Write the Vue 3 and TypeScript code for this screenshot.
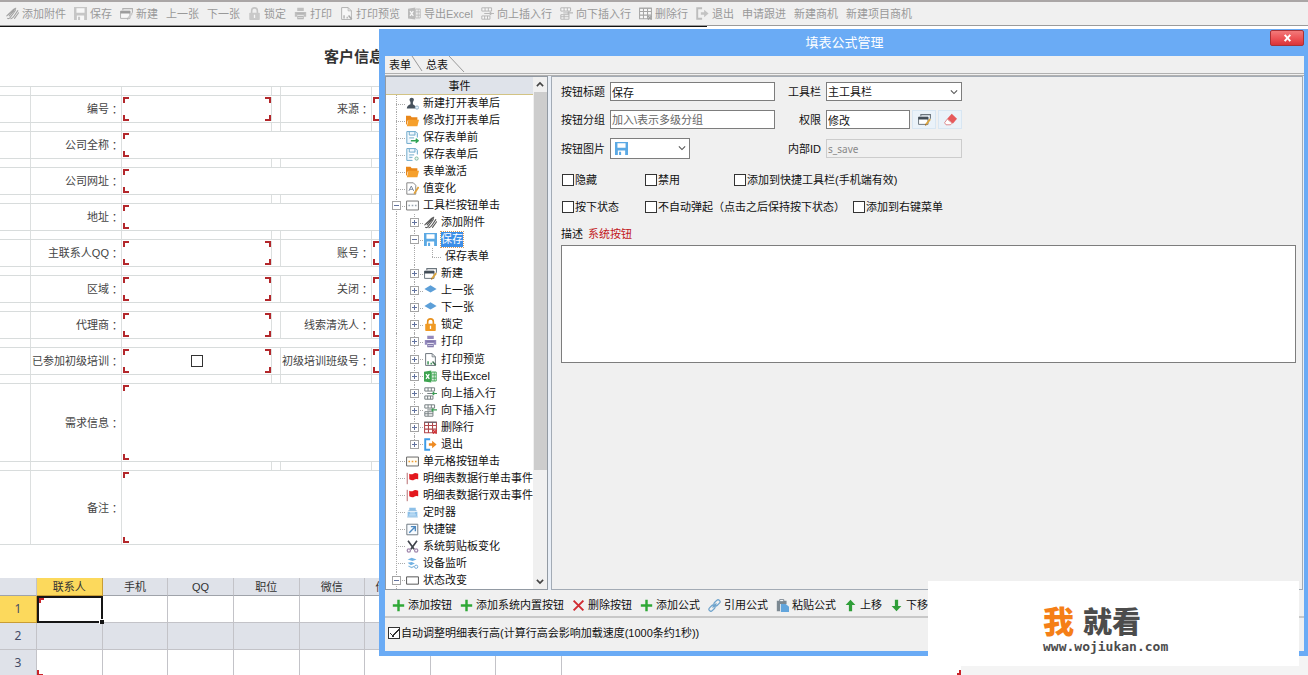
<script setup lang="ts">
import { ref } from 'vue'

interface Tool { text: string; icon?: string }
interface FormRow { label: string; second?: string; size: 'line' | 'tall' | 'note'; check?: boolean; plainGap?: boolean }
interface TreeNode { text: string; icon?: string; level: number; toggle?: '+' | '-'; last?: boolean; selected?: boolean }

const tools: Tool[] = [
  { text: '添加附件', icon: 'clip' },
  { text: '保存', icon: 'save' },
  { text: '新建', icon: 'new' },
  { text: '上一张' },
  { text: '下一张' },
  { text: '锁定', icon: 'lock' },
  { text: '打印', icon: 'print' },
  { text: '打印预览', icon: 'preview' },
  { text: '导出Excel', icon: 'excel' },
  { text: '向上插入行', icon: 'rowup' },
  { text: '向下插入行', icon: 'rowdown' },
  { text: '删除行', icon: 'delrow' },
  { text: '退出', icon: 'exit' },
  { text: '申请跟进' },
  { text: '新建商机' },
  { text: '新建项目商机' },
]

const rows: FormRow[] = [
  { label: '编号', second: '来源', size: 'line' },
  { label: '公司全称', size: 'line' },
  { label: '公司网址', size: 'line' },
  { label: '地址', size: 'line' },
  { label: '主联系人QQ', second: '账号', size: 'line', plainGap: true },
  { label: '区域', second: '关闭', size: 'line', plainGap: true },
  { label: '代理商', second: '线索清洗人', size: 'line', plainGap: true },
  { label: '已参加初级培训', second: '初级培训班级号', size: 'line', check: true },
  { label: '需求信息', size: 'tall' },
  { label: '备注', size: 'note' },
]

const columns: string[] = ['联系人', '手机', 'QQ', '职位', '微信', '传真号码', '', '']

const tree: TreeNode[] = [
  { text: '新建打开表单后', icon: 'user', level: 0 },
  { text: '修改打开表单后', icon: 'folder', level: 0 },
  { text: '保存表单前', icon: 'savebefore', level: 0 },
  { text: '保存表单后', icon: 'saveafter', level: 0 },
  { text: '表单激活', icon: 'folder', level: 0 },
  { text: '值变化', icon: 'value', level: 0 },
  { text: '工具栏按钮单击', icon: 'toolbox', level: 0, toggle: '-' },
  { text: '添加附件', icon: 'clip', level: 1, toggle: '+' },
  { text: '保存', icon: 'save', level: 1, toggle: '-', selected: true },
  { text: '保存表单', level: 2, last: true },
  { text: '新建', icon: 'new', level: 1, toggle: '+' },
  { text: '上一张', icon: 'diamond', level: 1, toggle: '+' },
  { text: '下一张', icon: 'diamond', level: 1, toggle: '+' },
  { text: '锁定', icon: 'lock', level: 1, toggle: '+' },
  { text: '打印', icon: 'print', level: 1, toggle: '+' },
  { text: '打印预览', icon: 'preview', level: 1, toggle: '+' },
  { text: '导出Excel', icon: 'excel', level: 1, toggle: '+' },
  { text: '向上插入行', icon: 'rowup', level: 1, toggle: '+' },
  { text: '向下插入行', icon: 'rowdown', level: 1, toggle: '+' },
  { text: '删除行', icon: 'delrow', level: 1, toggle: '+' },
  { text: '退出', icon: 'exit', level: 1, toggle: '+', last: true },
  { text: '单元格按钮单击', icon: 'cellbtn', level: 0 },
  { text: '明细表数据行单击事件', icon: 'flag', level: 0 },
  { text: '明细表数据行双击事件', icon: 'flag', level: 0 },
  { text: '定时器', icon: 'timer', level: 0 },
  { text: '快捷键', icon: 'shortcut', level: 0 },
  { text: '系统剪贴板变化', icon: 'scissors', level: 0 },
  { text: '设备监听', icon: 'device', level: 0 },
  { text: '状态改变', icon: 'rect', level: 0, toggle: '-' },
]

const actions: Tool[] = [
  { text: '添加按钮', icon: 'plus' },
  { text: '添加系统内置按钮', icon: 'plus' },
  { text: '删除按钮', icon: 'cross' },
  { text: '添加公式', icon: 'plus' },
  { text: '引用公式', icon: 'link' },
  { text: '粘贴公式', icon: 'paste' },
  { text: '上移', icon: 'up' },
  { text: '下移', icon: 'down' },
]

const buttonTitle = ref('保存')
const buttonGroup = ref('')
const permission = ref('修改')
const innerId = ref('s_save')
const description = ref('')
const autoHeight = ref(true)
</script>

<template>
  <div class="page">
    <svg class="symbols" aria-hidden="true">
      <symbol id="clip" viewBox="0 0 16 16"><g fill="none" stroke="#555" stroke-width="1.300" stroke-linecap="round"><path d="M1 11 L8 4 Q10.500 1.500 11.500 3 Q12 4 10 6.500 L5 13 Q3 15 2 14" /><path d="M4 11 L10 4.500 M6 14.500 Q8 14 10 11 L14.500 4.500 M10.500 14 L15.500 7 M3 9.500 L12 1.500" /></g></symbol>
      <symbol id="save" viewBox="0 0 16 16"><path fill="#5ba9e4" d="M0 0h16v16H0z" /><path fill="#fff" d="M3 1.500h10V7H3zM3.500 10.500h9V16h-9z" /><path fill="#5ba9e4" d="M5 12h2.500v4H5z" /></symbol>
      <symbol id="new" viewBox="0 0 16 16"><path fill="none" stroke="#6b757d" stroke-width="1.300" d="M3.500 4V2h11.800v5" /><path fill="#fff" stroke="#6b757d" stroke-width="1.200" d="M.700 5h11.600v9H.700z" /><path fill="#3f4a54" d="M.5 5h12v3H.5z" /><path stroke="#dba43c" stroke-width="2.200" d="M15 7.500L10 14" /><path fill="#a36b20" d="M8.500 15.800l.5-2.500 2 1.500z" /></symbol>
      <symbol id="diamond" viewBox="0 0 16 16"><path fill="#5c9fd8" d="M8 1.500L15.500 6 8 10.500.5 6z" /></symbol>
      <symbol id="lock" viewBox="0 0 16 16"><path fill="none" stroke="#e8901c" stroke-width="2" d="M4.500 8V4.500a3.500 3.500 0 017 0V8" /><rect x="1.500" y="7" width="13" height="9" rx="1" fill="#f09a24" /><path stroke="#fff" stroke-width="1.600" d="M8 9.500v4" /></symbol>
      <symbol id="print" viewBox="0 0 16 16"><path fill="#9389bd" d="M4 1h8v4H4zM1 6h14v6h-3v-2H4v2H1z" /><path fill="#7f76a8" d="M3 7h10v1.500H3zM4 11h8v4H4z" /><path stroke="#ddd9ee" d="M5 13h6" /></symbol>
      <symbol id="preview" viewBox="0 0 16 16"><path fill="#fff" stroke="#6c757c" stroke-width="1.200" d="M2 .700h8l4 4V15.300H2z" /><path fill="none" stroke="#6c757c" d="M10 .700v4h4" /><path fill="#4c9c64" d="M4 10h2v4H4zM8 12h2v2H8z" /><path stroke="#3f6f52" stroke-width="1.800" d="M10.500 10.500l4 4.500" /></symbol>
      <symbol id="excel" viewBox="0 0 16 16"><path fill="#3ea451" d="M0 2l9-1.500v15L0 14z" /><path stroke="#fff" stroke-width="1.600" d="M2.500 5l4 6M6.500 5l-4 6" /><path fill="#fff" stroke="#3ea451" stroke-width="1.200" d="M9.500 2.500H15v11H9.500z" /><path stroke="#3ea451" stroke-width="1.200" d="M12.500 2.500v11M10 6h5M10 10h5" /></symbol>
      <symbol id="rowup" viewBox="0 0 16 16"><path fill="#fff" stroke="#747d80" stroke-width="1.200" d="M1 1h12v4H1zM5 1v4M9 1v4M1 11h10v4H1zM4.500 11v4M8 11v4" /><path stroke="#747d80" stroke-width="1.200" d="M4 8h6" /><path fill="none" stroke="#3c9a55" stroke-width="1.500" d="M10 8h6M12.500 6L10.500 8l2 2" /></symbol>
      <symbol id="rowdown" viewBox="0 0 16 16"><path fill="#fff" stroke="#747d80" stroke-width="1.200" d="M1 1h12v4H1zM5 1v4M9 1v4M1 9.500h10v5.500H1zM1 12h10M5 9.500v5.500" /><path stroke="#747d80" stroke-width="1.200" d="M4 7.300h5" /><path fill="none" stroke="#3c9a55" stroke-width="1.500" d="M9 7.300h7M11.500 5.300l-2 2 2 2" /></symbol>
      <symbol id="delrow" viewBox="0 0 16 16"><path fill="#fff" stroke="#b0484c" stroke-width="1.300" d="M.700 1.500h14.600v13H.700zM.700 5.500h14.600M.700 10h14.600M5.500 1.500v13M10.500 1.500v13" /><path fill="#5e6570" d="M.5.800h15v1.400H.5z" /><path stroke="#d23438" stroke-width="1.800" d="M11 11l4.500 4.500M15.500 11L11 15.500" /></symbol>
      <symbol id="exit" viewBox="0 0 16 16"><path fill="none" stroke="#3d9be6" stroke-width="2.400" d="M7.500 1.500H1.500v13h6" /><path fill="#ee8a22" d="M6 6.500h4V3.500L15.500 8 10 12.500v-3H6z" /></symbol>
      <symbol id="user" viewBox="0 0 16 16"><circle cx="7" cy="3.500" r="2.700" fill="#47525d" /><path fill="#47525d" d="M5.500 5h3v4l3 2v3H1q0-3 4.500-5z" /><circle cx="13.500" cy="13" r="2" fill="#e8f3fb" stroke="#86a9c3" /></symbol>
      <symbol id="folder" viewBox="0 0 16 16"><path fill="#e8871a" d="M0 2h5.500L7 4h7v4H2l-1 5H0z" /><path fill="#f6a02c" d="M3 7h13l-2 8H1z" /></symbol>
      <symbol id="savebefore" viewBox="0 0 16 16"><path fill="#eef7fd" stroke="#6da9cb" stroke-width="1.200" d="M1 .700h11l2 2V8M1 .700v14.600h6" /><path fill="none" stroke="#6da9cb" stroke-width="1.200" d="M4 1v4h7V1M4 8.500h6" /><path fill="none" stroke="#2fa353" stroke-width="1.800" d="M6 12h9M12 9.500l3 2.500-3 2.500" /></symbol>
      <symbol id="saveafter" viewBox="0 0 16 16"><path fill="#eef7fd" stroke="#6da9cb" stroke-width="1.200" d="M1 .700h11l2 2V8M1 .700v14.600h7" /><path fill="none" stroke="#6da9cb" stroke-width="1.200" d="M4 1v4h7V1M4 8.500h6M4 11.500h4" /><circle cx="13" cy="13" r="2" fill="#eaf6ef" stroke="#6bac91" /></symbol>
      <symbol id="value" viewBox="0 0 16 16"><path fill="#fff" stroke="#7c7c7c" stroke-width="1.100" d="M1 1h8l3 3v11H1z" /><path fill="none" stroke="#68758b" d="M3.500 11l3-6 3 6M4.500 9h4" /><path stroke="#e0a23b" stroke-width="2.200" d="M15.500 6l-5.500 8.500" /></symbol>
      <symbol id="toolbox" viewBox="0 0 16 16"><path fill="#fff" stroke="#777" stroke-width="1.200" d="M.700 2.500h14.600v11H.700z" /><path stroke="#9aa6b1" stroke-width="2" stroke-dasharray="2 2" d="M3 8h10" /></symbol>
      <symbol id="cellbtn" viewBox="0 0 16 16"><path fill="#fffdf7" stroke="#666" stroke-width="1.200" d="M.700 2.500h14.600v11H.700z" /><path stroke="#ef9d2f" stroke-width="2" stroke-dasharray="2 2" d="M3 8h10" /></symbol>
      <symbol id="flag" viewBox="0 0 16 16"><path stroke="#b56a6d" stroke-width="1.200" d="M1.500 1v14" /><path fill="#e3181e" d="M4 2q3 1.500 5 0t6 0v7q-3-1-5 .5T4 9z" /></symbol>
      <symbol id="timer" viewBox="0 0 16 16"><path fill="#8dc0e8" d="M4 2h8v3H4zM2 7h12v6H2z" /><path stroke="#e8f5ff" d="M5 8.500h6M4 11h8" /><path stroke="#7db1dc" d="M3 5.500h10M1.500 13.500h13" /></symbol>
      <symbol id="shortcut" viewBox="0 0 16 16"><path fill="#f7fbff" stroke="#707a83" stroke-width="1.200" d="M1 1.500h13.500v13H1z" /><path fill="none" stroke="#4c87bd" stroke-width="1.700" d="M4 12l7-7M6 4.500h5.500V10" /></symbol>
      <symbol id="scissors" viewBox="0 0 16 16"><path stroke="#3f434a" stroke-width="2" d="M2.500 1l7.500 10.500M13.500 1L6 11.500" /><g fill="none" stroke="#a38aae" stroke-width="1.600"><circle cx="3.500" cy="13" r="2" /><circle cx="12.500" cy="13" r="2" /></g></symbol>
      <symbol id="device" viewBox="0 0 16 16"><path fill="#72b2e3" d="M2 3l5-2 6 2-5 2zM2 7l5-1 4 2-5 2z" /><path fill="none" stroke="#87b9dd" stroke-width="1.300" d="M3 11l4 2 3-1.500" /><circle cx="12.500" cy="12" r="2" fill="#fff" stroke="#5a9bd0" /></symbol>
      <symbol id="rect" viewBox="0 0 16 16"><path fill="#fff" stroke="#555" stroke-width="1.200" d="M.700 3.500h14.600v9H.700z" /></symbol>
      <symbol id="plus" viewBox="0 0 16 16"><path stroke="#2fa836" stroke-width="3" d="M8 1v14M1 8h14" /></symbol>
      <symbol id="cross" viewBox="0 0 16 16"><path stroke="#d12b32" stroke-width="2.400" d="M2 2l12 12M14 2L2 14" /></symbol>
      <symbol id="link" viewBox="0 0 16 16"><g fill="none" stroke="#6ea3cc" stroke-width="1.500"><rect x="7" y="2.500" width="8.500" height="4.800" rx="2.400" transform="rotate(-45 11 5)" /><rect x=".5" y="8.700" width="8.500" height="4.800" rx="2.400" transform="rotate(-45 5 11)" /><path d="M5.500 10.500l5-5" /></g></symbol>
      <symbol id="paste" viewBox="0 0 16 16"><path fill="#7c8992" d="M1 2h12v4H5v9H1z" /><path fill="#fff" stroke="#6b7882" d="M4.500.700h5v2.600h-5z" /><path fill="#62a5dc" d="M6 6h6l4 3.500V16H6z" /></symbol>
      <symbol id="up" viewBox="0 0 16 16"><path fill="#2f9e38" d="M8 1l6 6.500h-4V15H6V7.500H2z" /></symbol>
      <symbol id="down" viewBox="0 0 16 16"><path fill="#2f9e38" d="M8 15l6-6.500h-4V1H6v7.500H2z" /></symbol>
      <symbol id="eraser" viewBox="0 0 16 16"><path fill="#e65a5c" d="M9.500 1L16 7l-5 6-7-6z" /><path fill="#fff" stroke="#d97375" d="M4 7.500l6 5-2 2H2.500L.700 12z" /></symbol>
      <symbol id="chevdown" viewBox="0 0 16 16"><path fill="none" stroke="#555" stroke-width="1.800" d="M3 5.500l5 5 5-5" /></symbol>
      <symbol id="chevup" viewBox="0 0 16 16"><path fill="none" stroke="#444" stroke-width="2.600" d="M3 10.500l5-5 5 5" /></symbol>
      <symbol id="chevbold" viewBox="0 0 16 16"><path fill="none" stroke="#444" stroke-width="2.600" d="M3 5.500l5 5 5-5" /></symbol>
    </svg>

    <header class="toolbar">
      <button v-for="tool in tools" :key="tool.text" type="button" class="tool">
        <svg v-if="tool.icon" class="icon"><use :href="'#' + tool.icon" /></svg>{{ tool.text }}
      </button>
    </header>

    <main class="sheet">
      <h1 class="sheet-title">客户信息</h1>
      <div class="record">
        <div class="gap-row"><i></i><i></i><i></i><i></i><i></i><i></i></div>
        <template v-for="(row, index) in rows" :key="row.label">
          <div class="field-row" :class="[row.size, { wide: !row.second }]">
            <span class="margin-cell"></span>
            <label class="field-label" :for="'field-' + index">{{ row.label }}<span class="colon">：</span></label>
            <div class="field">
              <input v-if="row.check" :id="'field-' + index" type="checkbox" class="box" />
              <input v-else :id="'field-' + index" type="text" class="plain" />
            </div>
            <template v-if="row.second">
              <span class="spacer"></span>
              <label class="field-label" :for="'second-' + index">{{ row.second }}<span class="colon">：</span></label>
              <div class="field"><input :id="'second-' + index" type="text" class="plain" /></div>
            </template>
          </div>
          <div v-if="index < rows.length - 1" class="gap-row" :class="{ open: row.plainGap }"><i></i><i></i><i></i><i></i><i></i><i></i></div>
        </template>
      </div>

      <table class="detail">
        <colgroup><col class="number-col" /><col v-for="(c, i) in columns" :key="i" /></colgroup>
        <thead>
          <tr><th></th><th v-for="(c, i) in columns" :key="i" :class="{ current: i === 0 }">{{ c }}</th></tr>
        </thead>
        <tbody>
          <tr v-for="n in 3" :key="n" :class="{ shaded: n === 2 }">
            <th :class="{ current: n === 1 }">{{ n }}</th>
            <td v-for="(c, i) in columns" :key="i" :class="{ active: n === 1 && i === 0, finish: n === 3 && i === 0 }"></td>
          </tr>
        </tbody>
      </table>
      <div class="outside"></div>
    </main>

    <section class="dialog" aria-labelledby="dialog-title">
      <div class="titlebar">
        <h2 id="dialog-title">填表公式管理</h2>
        <button type="button" class="close" aria-label="关闭">
          <svg viewBox="0 0 10 10"><path stroke="#fff" stroke-width="2.400" d="M1.500 1l7 8M8.500 1l-7 8" /></svg>
        </button>
      </div>
      <div class="client">
        <nav class="tabs">
          <button type="button" class="tab">表单</button>
          <svg class="slant" viewBox="0 0 12 17"><path d="M1 0l10 15" /></svg>
          <button type="button" class="tab">总表</button>
          <svg class="slant end" viewBox="0 0 17 17"><path d="M1 0l15 16" /></svg>
        </nav>

        <div class="panes">
          <aside class="events">
            <div class="events-main">
              <div class="events-head">事件</div>
              <ul class="tree">
                <li v-for="(node, index) in tree" :key="index" class="node">
                  <span v-for="g in node.level" :key="g" class="guide"></span>
                  <span class="guide branch" :class="{ last: node.last }">
                    <button v-if="node.toggle" type="button" class="toggle" :class="{ expand: node.toggle === '+' }" :aria-label="node.text"></button>
                  </span>
                  <svg v-if="node.icon" class="icon"><use :href="'#' + node.icon" /></svg>
                  <span class="node-text" :class="{ selected: node.selected }">{{ node.text }}</span>
                </li>
              </ul>
            </div>
            <div class="scrollbar">
              <svg><use href="#chevup" /></svg>
              <span class="thumb"></span>
              <svg><use href="#chevbold" /></svg>
            </div>
          </aside>

          <div class="props">
            <div class="prop-grid">
              <label for="p-title">按钮标题</label>
              <input id="p-title" v-model="buttonTitle" type="text" class="text" />
              <label for="p-bar" class="right">工具栏</label>
              <div class="select">
                <select id="p-bar"><option>主工具栏</option></select>
                <svg class="chev"><use href="#chevdown" /></svg>
              </div>
              <label for="p-group">按钮分组</label>
              <input id="p-group" v-model="buttonGroup" type="text" class="text" placeholder="加入\表示多级分组" />
              <label for="p-right" class="right">权限</label>
              <div class="permission">
                <input id="p-right" v-model="permission" type="text" class="text" />
                <button type="button" class="mini" aria-label="编辑"><svg class="icon"><use href="#new" /></svg></button>
                <button type="button" class="mini" aria-label="清除"><svg class="icon"><use href="#eraser" /></svg></button>
              </div>
              <label for="p-image">按钮图片</label>
              <div class="select image">
                <select id="p-image"><option value="save"></option></select>
                <svg class="picked"><use href="#save" /></svg>
                <svg class="chev"><use href="#chevdown" /></svg>
              </div>
              <label for="p-id" class="right">内部ID</label>
              <input id="p-id" v-model="innerId" type="text" class="text" disabled />
            </div>

            <div class="checks">
              <label><input type="checkbox" class="box" />隐藏</label>
              <label><input type="checkbox" class="box" />禁用</label>
              <label class="quick"><input type="checkbox" class="box" />添加到快捷工具栏(手机端有效)</label>
            </div>
            <div class="checks">
              <label><input type="checkbox" class="box" />按下状态</label>
              <label class="hold"><input type="checkbox" class="box" />不自动弹起（点击之后保持按下状态）</label>
              <label><input type="checkbox" class="box" />添加到右键菜单</label>
            </div>
            <div class="desc-label"><label for="p-desc">描述</label><span class="system">系统按钮</span></div>
            <textarea id="p-desc" v-model="description" class="desc"></textarea>
          </div>
        </div>

        <div class="actions">
          <button v-for="(action, index) in actions" :key="index" type="button" class="tool">
            <svg class="icon"><use :href="'#' + action.icon" /></svg>{{ action.text }}
          </button>
        </div>
        <div class="status">
          <label><input v-model="autoHeight" type="checkbox" class="box" />自动调整明细表行高(计算行高会影响加载速度(1000条约1秒))</label>
        </div>
      </div>
    </section>

    <div class="brand">
      <div class="brand-name"><span class="accent">我</span><span>就看</span></div>
      <div class="brand-url">www.wojiukan.com</div>
    </div>
  </div>
</template>

<style>
body {
  margin: 0;
  overflow: hidden;
}
</style>

<style scoped>
.page {
  position: relative;
  height: 100vh;
  overflow: hidden;
  background: #fff;
  color: #111;
  font: 11px/16px "Liberation Sans", "Noto Sans CJK SC", sans-serif;
}
.page * {
  box-sizing: border-box;
}
.symbols {
  position: absolute;
  width: 0;
  height: 0;
}
button,
input,
select,
textarea {
  font: inherit;
  color: inherit;
  margin: 0;
  padding: 0;
}
.icon {
  width: 13px;
  height: 13px;
  flex: none;
}

.toolbar {
  display: flex;
  align-items: center;
  gap: 8px;
  height: 26px;
  padding-left: 6px;
  background: #f0f0f0;
  border-top: 2px solid #aaa6a6;
  border-bottom: 1px solid #9b9b9b;
  color: #999;
}
.tool {
  display: flex;
  align-items: center;
  gap: 3px;
  border: 0;
  background: none;
  white-space: nowrap;
}
.toolbar .icon {
  filter: grayscale(1);
  opacity: 0.5;
}

.sheet::before {
  content: "";
  display: block;
  width: 707px;
  height: 1px;
  background: #111;
}
.sheet-title {
  margin: 0;
  height: 59px;
  padding-left: 324px;
  font-size: 15px;
  line-height: 59px;
  color: #333;
}
.record {
  border-top: 1px solid #d8dcdc;
  color: #444;
}
.field-row,
.gap-row {
  display: grid;
  grid-template-columns: 31px 91px 150px 9px 91px 1fr;
  border-bottom: 1px solid #d8dcdc;
}
.gap-row {
  height: 9px;
}
.gap-row i,
.field-row > * {
  border-right: 1px solid #dcdfdf;
}
.gap-row.open i:nth-child(n + 3) {
  border-right: 0;
}
.field-row.line {
  height: 27px;
}
.field-row.tall {
  height: 78px;
}
.field-row.note {
  height: 74px;
}
.field-label {
  display: flex;
  align-items: center;
  justify-content: flex-end;
  padding-right: 1px;
  white-space: nowrap;
}
.colon {
  font-family: "Noto Sans CJK TC", sans-serif;
}
.wide .field {
  grid-column: 3 / -1;
}
.field {
  --c: #b3272b;
  display: flex;
  align-items: center;
  justify-content: center;
  margin: 1px 0 1px 1px;
  background:
    linear-gradient(var(--c), var(--c)) 0 0 / 6px 2px,
    linear-gradient(var(--c), var(--c)) 0 0 / 2px 6px,
    linear-gradient(var(--c), var(--c)) 100% 0 / 6px 2px,
    linear-gradient(var(--c), var(--c)) 100% 0 / 2px 6px,
    linear-gradient(var(--c), var(--c)) 0 100% / 6px 2px,
    linear-gradient(var(--c), var(--c)) 0 100% / 2px 6px,
    linear-gradient(var(--c), var(--c)) 100% 100% / 6px 2px,
    linear-gradient(var(--c), var(--c)) 100% 100% / 2px 6px;
  background-repeat: no-repeat;
}
.plain {
  width: 100%;
  height: 100%;
  border: 0;
  background: none;
}
.box {
  appearance: none;
  flex: none;
  width: 12px;
  height: 12px;
  border: 1px solid #333;
  background: #fff;
}

.detail {
  width: 562px;
  margin-top: 33px;
  border-collapse: separate;
  border-spacing: 0;
  table-layout: fixed;
  color: #333;
}
.number-col {
  width: 37px;
}
.detail th,
.detail td {
  height: 27px;
  padding: 0;
  border-right: 1px solid #c3c3c8;
  border-bottom: 1px solid #c3c3c8;
  font-weight: 400;
}
.detail th {
  background: #dfe2e9;
}
.detail thead th {
  height: 18px;
  line-height: 16px;
  border-bottom-color: #9fa3aa;
  white-space: nowrap;
}
.detail tbody th {
  font-family: "Noto Sans", sans-serif;
  font-size: 12px;
  color: #444b66;
}
.detail th.current {
  background: #fcd95c;
  border-color: #c99d34;
}
.shaded td {
  background: #dfe2e9;
}
.detail .active {
  position: relative;
  border: 2px solid #151515;
  background:
    linear-gradient(#c9242a, #c9242a) 0 0 / 5px 2px no-repeat,
    linear-gradient(#c9242a, #c9242a) 0 0 / 2px 5px no-repeat;
}
.active::after {
  content: "";
  position: absolute;
  right: -3px;
  bottom: -3px;
  width: 4px;
  height: 4px;
  background: #151515;
  border: 1px solid #fff;
  border-width: 1px 0 0 1px;
}
.detail .finish {
  background:
    linear-gradient(#c9242a, #c9242a) 0 100% / 6px 2px no-repeat,
    linear-gradient(#c9242a, #c9242a) 0 100% / 2px 6px no-repeat;
}
.outside {
  position: absolute;
  left: 957px;
  right: 0;
  bottom: 0;
  height: 19px;
  background:
    linear-gradient(#c9242a, #c9242a) 0 100% / 4px 2px no-repeat,
    linear-gradient(#c9242a, #c9242a) 2px 100% / 2px 5px no-repeat,
    linear-gradient(#f4f4f4, #f4f4f4) 4px 0 no-repeat;
}

.dialog {
  position: absolute;
  left: 379px;
  right: 0;
  top: 29px;
  bottom: 19px;
  display: flex;
  flex-direction: column;
  padding: 0 4px 5px 6px;
  background: #6aabf5;
}
.titlebar {
  position: relative;
  flex: none;
  height: 27px;
}
.titlebar h2 {
  margin: 0;
  font-size: 13px;
  font-weight: 400;
  line-height: 27px;
  text-align: center;
  color: #fff;
}
.close {
  position: absolute;
  top: 1px;
  right: 0;
  display: grid;
  place-items: center;
  width: 34px;
  height: 16px;
  border: 1px solid #a83236;
  border-radius: 2px;
  background: linear-gradient(#f27a7a, #ee5558 50%, #d93439);
}
.close svg {
  width: 9px;
  height: 8px;
}
.client {
  flex: 1;
  display: flex;
  flex-direction: column;
  min-height: 0;
  background: #f0f0f0;
}
.tabs {
  flex: none;
  display: flex;
  height: 20px;
  padding-left: 4px;
  border-bottom: 3px double #b0b0b0;
}
.tab {
  border: 0;
  background: none;
  line-height: 19px;
}
.slant {
  width: 12px;
  height: 17px;
  fill: none;
  stroke: #999;
  margin-right: 3px;
}
.slant.end {
  width: 17px;
}
.panes {
  flex: 1;
  display: flex;
  gap: 3px;
  min-height: 0;
  padding-right: 1px;
  background: #e9eff7;
}
.events {
  flex: none;
  display: flex;
  width: 163px;
  border: 1px solid #929aa3;
  background: #fff;
}
.events-main {
  flex: 1;
  display: flex;
  flex-direction: column;
  min-width: 0;
}
.events-head {
  flex: none;
  height: 18px;
  border-bottom: 1px solid #d2c384;
  background: #dfe3ea;
  line-height: 18px;
  text-align: center;
}
.tree {
  flex: 1;
  display: grid;
  grid-auto-rows: 1fr;
  min-height: 0;
  margin: 0;
  padding: 0 0 0 2px;
  list-style: none;
}
.node {
  display: flex;
  align-items: center;
  min-height: 0;
  white-space: nowrap;
}
.guide {
  position: relative;
  flex: none;
  align-self: stretch;
  display: flex;
  align-items: center;
  width: 18px;
}
.guide::before {
  content: "";
  position: absolute;
  left: 8px;
  top: 0;
  bottom: 0;
  border-left: 1px dotted #aaa;
}
.guide.last::before {
  bottom: 50%;
}
.branch::after {
  content: "";
  position: absolute;
  left: 8px;
  right: 1px;
  top: 50%;
  border-top: 1px dotted #aaa;
}
.toggle {
  position: relative;
  z-index: 1;
  width: 9px;
  height: 9px;
  margin-left: 4px;
  border: 1px solid #a4a4a4;
  background: linear-gradient(#62739f, #62739f) 50% 50% / 5px 1px no-repeat #fff;
}
.toggle.expand {
  background:
    linear-gradient(#62739f, #62739f) 50% 50% / 5px 1px no-repeat,
    linear-gradient(#62739f, #62739f) 50% 50% / 1px 5px no-repeat #fff;
}
.node-text {
  margin-left: 3px;
  line-height: 15px;
}
.node .icon + .node-text {
  margin-left: 4px;
}
.node-text.selected {
  background: #3c8fe8;
  outline: 1px dotted #d59a5c;
  color: #fff;
}
.scrollbar {
  flex: none;
  display: flex;
  flex-direction: column;
  align-items: center;
  width: 14px;
  background: #f0f0f0;
}
.scrollbar svg {
  flex: none;
  width: 10px;
  height: 15px;
}
.thumb {
  width: 13px;
  height: 378px;
  margin-bottom: auto;
  background: #cdcdcd;
}

.props {
  flex: 1;
  display: flex;
  flex-direction: column;
  min-width: 0;
  padding: 5px 6px 0 9px;
  border: 1px solid #a3abb5;
  background: #f0f0f0;
}
.prop-grid {
  display: grid;
  grid-template-columns: 49px 165px 46px 136px;
  grid-template-rows: 19px 19px 21px;
  row-gap: 9px;
  align-items: center;
}
.right {
  text-align: right;
}
.prop-grid > :nth-child(4n) {
  margin-left: 5px;
  width: 136px;
}
.text {
  width: 100%;
  height: 19px;
  min-width: 0;
  padding-left: 1px;
  border: 1px solid #7d7d7d;
  background: #fff;
}
.text::placeholder {
  color: #666;
  opacity: 1;
}
.text:disabled {
  border-color: #ccc;
  background: #f0f0f0;
  color: #888;
  font-family: "Noto Sans", sans-serif;
  font-size: 10px;
}
.select {
  position: relative;
  height: 19px;
}
.select select {
  appearance: none;
  width: 100%;
  height: 100%;
  padding-left: 1px;
  border: 1px solid #7d7d7d;
  border-radius: 0;
  background: #fff;
}
.select.image {
  width: 80px;
  height: 21px;
}
.chev {
  position: absolute;
  right: 3px;
  top: 5px;
  width: 10px;
  height: 10px;
}
.picked {
  position: absolute;
  left: 5px;
  top: 4px;
  width: 13px;
  height: 13px;
}
.permission {
  display: flex;
  gap: 2px;
}
.mini {
  flex: none;
  display: grid;
  place-items: center;
  width: 24px;
  height: 19px;
  border: 1px solid #d8e6f2;
  background: #eaf2f9;
}
.checks {
  display: flex;
  margin: 13px 0 0 1px;
  height: 16px;
}
.checks + .checks {
  margin-top: 11px;
}
.checks label,
.status label {
  display: flex;
  align-items: center;
  gap: 1px;
  white-space: nowrap;
}
.checks label:first-child {
  width: 83px;
}
.checks .quick {
  margin-left: 54px;
}
.checks .hold {
  width: 208px;
}
.desc-label {
  display: flex;
  gap: 5px;
  margin-top: 11px;
}
.system {
  color: #c2181c;
}
.desc {
  height: 118px;
  margin-top: 3px;
  border: 1px solid #7d7d7d;
  background: #fff;
  resize: none;
}
.actions {
  flex: none;
  display: flex;
  align-items: center;
  gap: 8px;
  height: 28px;
  padding: 4px 0 0 7px;
  border-bottom: 2px solid #c8c8c8;
}
.status {
  flex: none;
  display: flex;
  height: 33px;
  padding: 0 0 3px 3px;
}
.status .box:checked {
  background:
    linear-gradient(45deg, transparent 46%, #333 46%, #333 58%, transparent 58%) 1px 5px / 4px 4px no-repeat,
    linear-gradient(-45deg, transparent 44%, #333 44%, #333 56%, transparent 56%) 3px 1px / 7px 8px no-repeat #fff;
}

.brand {
  position: absolute;
  right: 9px;
  bottom: 9px;
  width: 371px;
  height: 85px;
  padding: 26px 0 0 115px;
  background: #fff;
  color: #4c4c4c;
}
.brand-name {
  display: flex;
  align-items: center;
  gap: 9px;
  height: 32px;
  font-size: 29px;
  font-weight: 900;
  line-height: 32px;
}
.accent {
  color: #f57f17;
  font-size: 31px;
}
.brand-url {
  font: bold 13px/16px "DejaVu Sans Mono", monospace;
}
</style>
